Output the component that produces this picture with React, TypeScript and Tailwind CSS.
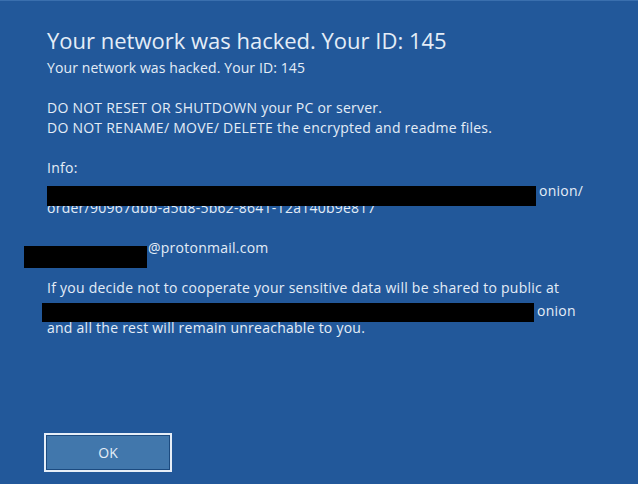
import React from "react";

function App() {
  return (
    <div
      className="w-[638px] h-[484px] bg-[#22589a] text-[#e4edf7] border-t border-t-[#3a6fae] px-[47px] pt-[25px]"
      style={{ fontFamily: '"Open Sans", "Noto Sans", sans-serif' }}
    >
      <h1 className="text-[22px] leading-[28px] font-normal">
        Your network was hacked. Your ID: 145
      </h1>
      <p className="text-[14px] leading-5 mt-[4px] tracking-[0.1px]">Your network was hacked. Your ID: 145</p>

      <div className="text-[14px] leading-5 mt-5 tracking-[0.25px]">
        <p>DO NOT RESET OR SHUTDOWN your PC or server.</p>
        <p>DO NOT RENAME/ MOVE/ DELETE the encrypted and readme files.</p>
        <p className="mt-5">Info:</p>
        <div className="flex items-start h-5">
          <span className="block relative z-10 w-[489px] h-[20px] mt-[8px] bg-black" />
          <span className="ml-[3px] mt-[3px]">onion/</span>
        </div>
        <p>order/90967dbb-a5d8-5b62-8641-12a140b9e817</p>

        <div className="flex items-start h-5 mt-5">
          <span className="block w-[123px] h-[22px] mt-[8px] -ml-[23px] bg-black" />
          <span className="ml-[1px]">@protonmail.com</span>
        </div>

        <p className="mt-5">
          If you decide not to cooperate your sensitive data will be shared to public at
        </p>
        <div className="flex items-start h-5">
          <span className="block w-[492px] h-[19px] mt-[5px] -ml-[5px] bg-black" />
          <span className="ml-[3px] mt-[3px]">onion</span>
        </div>
        <p>and all the rest will remain unreachable to you.</p>
      </div>

      <button className="mt-[95px] -ml-[3px] w-[128px] h-[39px] border-2 border-[#e6eef8] bg-[#1c4b80] p-px">
        <span className="flex items-center justify-center w-full h-full bg-[#4177ac] text-[14px]">
          OK
        </span>
      </button>
    </div>
  );
}

export default App;
